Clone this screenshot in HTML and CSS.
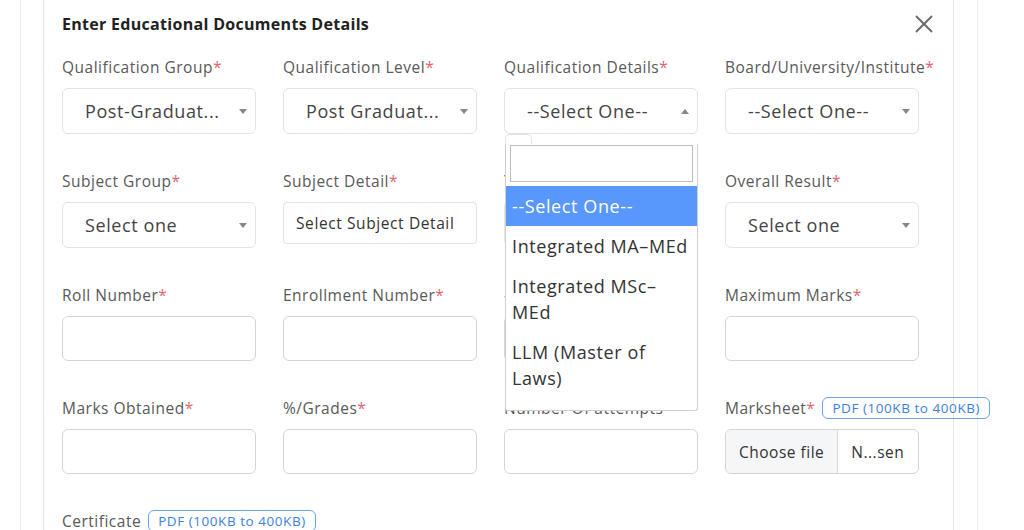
FILE: index.html
```html
<!DOCTYPE html>
<html>
<head>
    <title>Educational Documents</title>
    <link rel="stylesheet" href="styles.css">
</head>
<body>
    <div class="outer">
        <div class="modal">
            <div class="modal-header">
                <h2>Enter Educational Documents Details</h2>
                <svg class="close" width="20" height="20" viewBox="0 0 20 20">
                    <path d="M2 2 L18 18 M18 2 L2 18" stroke="#6b6b6b" stroke-width="2" fill="none"/>
                </svg>
            </div>

            <div class="form-grid">
                <!-- row 1 -->
                <div class="field">
                    <label>Qualification Group<span class="req">*</span></label>
                    <div class="select"><span>Post-Graduat...</span><i class="arrow"></i></div>
                </div>
                <div class="field">
                    <label>Qualification Level<span class="req">*</span></label>
                    <div class="select"><span>Post Graduat...</span><i class="arrow"></i></div>
                </div>
                <div class="field open">
                    <label>Qualification Details<span class="req">*</span></label>
                    <div class="select"><span>--Select One--</span><i class="arrow up"></i></div>
                    <div class="dropdown">
                        <span class="tab"></span>
                        <div class="dropdown-box">
                            <div class="search"></div>
                            <ul class="options">
                                <li class="active">--Select One--</li>
                                <li>Integrated MA–MEd</li>
                                <li>Integrated MSc–MEd</li>
                                <li>LLM (Master of Laws)</li>
                                <li>M.A.</li>
                            </ul>
                        </div>
                    </div>
                </div>
                <div class="field">
                    <label>Board/University/Institute<span class="req">*</span></label>
                    <div class="select"><span>--Select One--</span><i class="arrow"></i></div>
                </div>

                <!-- row 2 -->
                <div class="field">
                    <label>Subject Group<span class="req">*</span></label>
                    <div class="select"><span>Select one</span><i class="arrow"></i></div>
                </div>
                <div class="field">
                    <label>Subject Detail<span class="req">*</span></label>
                    <div class="text-select">Select Subject Detail</div>
                </div>
                <div class="field">
                    <label>Year of Passing<span class="req">*</span></label>
                    <div class="text-select"></div>
                </div>
                <div class="field">
                    <label>Overall Result<span class="req">*</span></label>
                    <div class="select"><span>Select one</span><i class="arrow"></i></div>
                </div>

                <!-- row 3 -->
                <div class="field">
                    <label>Roll Number<span class="req">*</span></label>
                    <div class="input"></div>
                </div>
                <div class="field">
                    <label>Enrollment Number<span class="req">*</span></label>
                    <div class="input"></div>
                </div>
                <div class="field">
                    <label>-Session<span class="req">*</span></label>
                    <div class="input"></div>
                </div>
                <div class="field">
                    <label>Maximum Marks<span class="req">*</span></label>
                    <div class="input"></div>
                </div>

                <!-- row 4 -->
                <div class="field">
                    <label>Marks Obtained<span class="req">*</span></label>
                    <div class="input"></div>
                </div>
                <div class="field">
                    <label>%/Grades<span class="req">*</span></label>
                    <div class="input"></div>
                </div>
                <div class="field">
                    <label>Number Of attempts</label>
                    <div class="input"></div>
                </div>
                <div class="field">
                    <label>Marksheet<span class="req">*</span> <span class="badge">PDF (100KB to 400KB)</span></label>
                    <div class="file"><span class="file-btn">Choose file</span><span class="file-name">N...sen</span></div>
                </div>

                <!-- row 5 -->
                <div class="field">
                    <label>Certificate <span class="badge">PDF (100KB to 400KB)</span></label>
                </div>
            </div>
        </div>
    </div>
</body>
</html>
```

FILE: styles.css
```css
body {
    margin: 0;
    background: #ffffff;
    font-family: "Open Sans", Arial, sans-serif;
    color: #333;
    overflow: hidden;
}
.outer {
    margin-left: 20px;
    width: 956px;
    height: 530px;
    border-left: 1px solid #ececec;
    border-right: 1px solid #ececec;
}
.modal {
    margin-left: 22px;
    width: 911px;
    height: 530px;
    border-left: 1px solid #e6e6e6;
    border-right: 1px solid #e6e6e6;
    padding-left: 18px;
    box-sizing: border-box;
}
.modal-header {
    display: flex;
    align-items: center;
    justify-content: space-between;
    width: 872px;
    height: 48px;
}
.modal-header h2 {
    margin: 0;
    font-size: 16px;
    font-weight: 700;
    letter-spacing: 0.3px;
    color: #222;
}
.form-grid {
    display: grid;
    grid-template-columns: repeat(4, 194px);
    column-gap: 27px;
    row-gap: 36px;
    margin-top: 8px;
}
.field {
    position: relative;
}
.field label {
    display: flex;
    align-items: center;
    height: 22px;
    margin-bottom: 10px;
    font-size: 15.5px;
    letter-spacing: 0.5px;
    color: #595959;
    white-space: nowrap;
}
.req {
    color: #e0676f;
}
.badge {
    display: inline-block;
    margin-left: 7px;
    padding: 0 9px;
    height: 22px;
    line-height: 21px;
    border: 1px solid #6ea2ea;
    border-radius: 6px;
    font-size: 13.5px;
    letter-spacing: 0.55px;
    color: #3d7fdc;
    box-sizing: border-box;
}
.select {
    position: relative;
    height: 46px;
    border: 1px solid #e3e3e3;
    border-radius: 6px;
    box-sizing: border-box;
    display: flex;
    align-items: center;
    padding-left: 22px;
    font-size: 18px;
    letter-spacing: 0.6px;
    color: #444;
}
.arrow {
    position: absolute;
    right: 8px;
    top: 20px;
    width: 0;
    height: 0;
    border-left: 4px solid transparent;
    border-right: 4px solid transparent;
    border-top: 5px solid #888;
}
.arrow.up {
    border-top: 0;
    border-bottom: 5px solid #888;
}
.text-select {
    height: 42px;
    border: 1px solid #e3e3e3;
    border-radius: 4px;
    box-sizing: border-box;
    display: flex;
    align-items: center;
    padding-left: 12px;
    font-size: 15.5px;
    letter-spacing: 0.6px;
    color: #333;
}
.input {
    height: 45px;
    border: 1px solid #d4d4d4;
    border-radius: 6px;
    box-sizing: border-box;
}
.file {
    display: flex;
    height: 45px;
    border: 1px solid #d4d4d4;
    border-radius: 6px;
    box-sizing: border-box;
    overflow: hidden;
    font-size: 15.5px;
    letter-spacing: 0.5px;
    color: #333;
}
.file-btn {
    display: flex;
    align-items: center;
    padding: 0 13px;
    background: #f5f6f8;
    border-right: 1px solid #dcdcdc;
}
.file-name {
    display: flex;
    align-items: center;
    padding-left: 13px;
}

/* open select2 style dropdown */
.dropdown {
    position: absolute;
    top: 78px;
    left: 1px;
    width: 193px;
    z-index: 10;
}
.tab {
    display: block;
    width: 25px;
    height: 9px;
    border: 1px solid #e3e3e3;
    border-bottom: 0;
    border-radius: 5px 5px 0 0;
    background: #fff;
}
.dropdown-box {
    background: #fff;
    border: 1px solid #cfcfcf;
    border-top: 0;
    border-radius: 0 0 3px 3px;
    height: 265px;
    overflow: hidden;
    padding-top: 1px;
}
.search {
    margin: 0 4px 4px 4px;
    height: 37px;
    border: 1px solid #bdbdbd;
    box-sizing: border-box;
}
.options {
    list-style: none;
    margin: 0;
    padding: 0;
}
.options li {
    padding: 7px 6px;
    font-size: 18px;
    line-height: 26px;
    letter-spacing: 0.6px;
    color: #333;
}
.options li.active {
    background: #5897fb;
    color: #fff;
}
```
